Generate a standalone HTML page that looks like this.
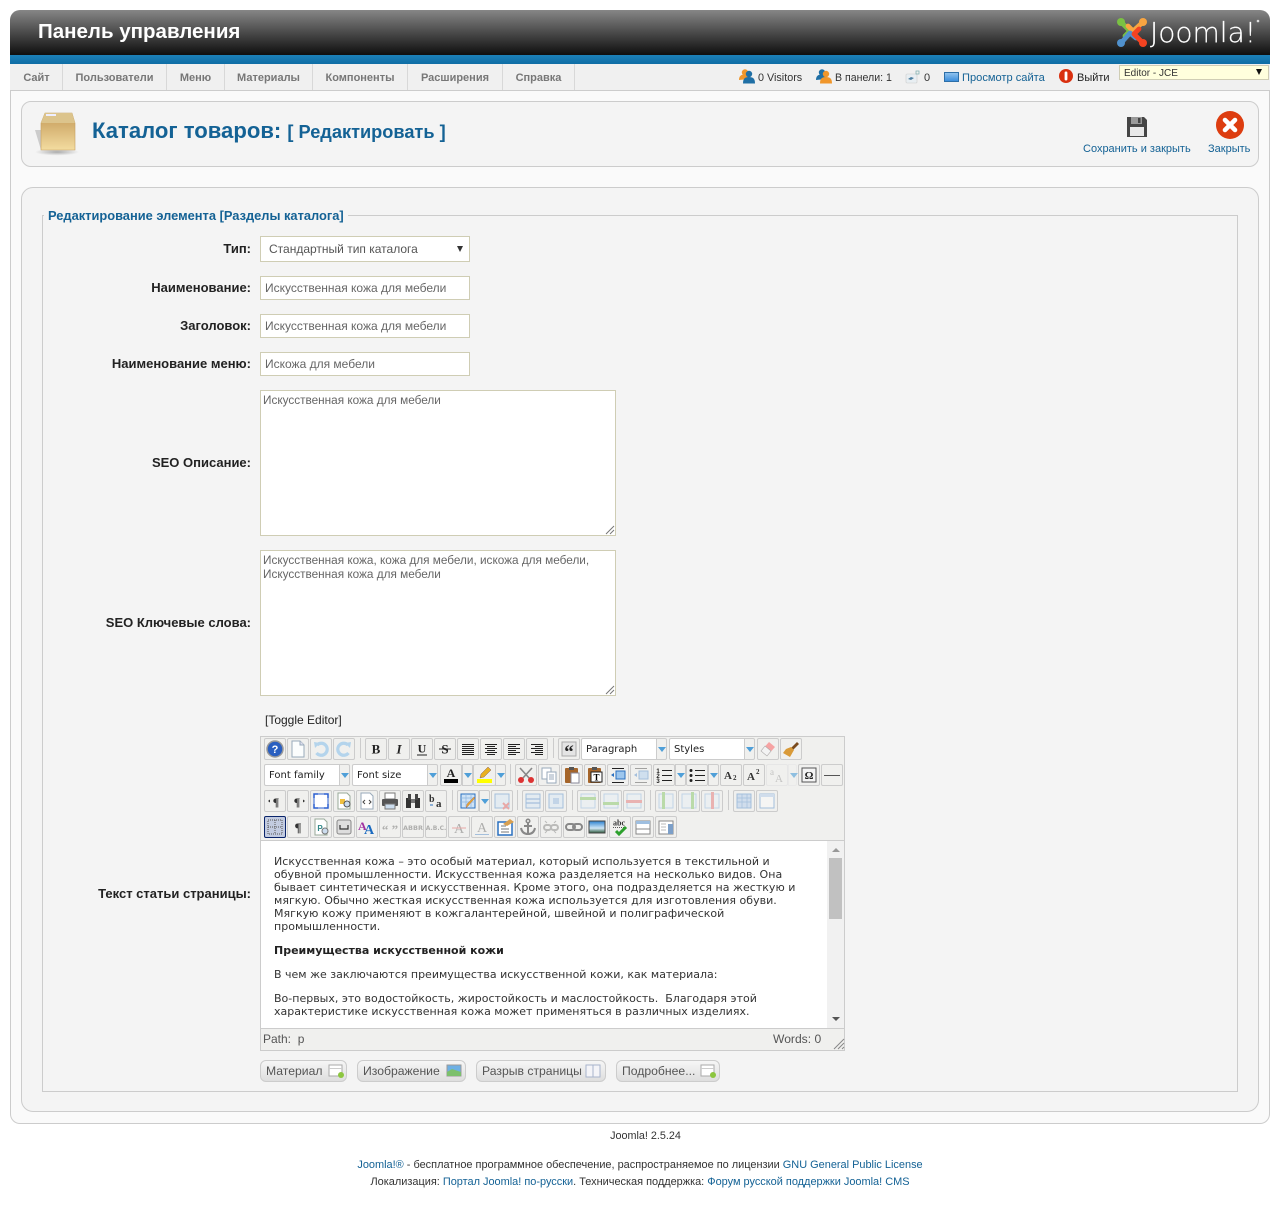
<!DOCTYPE html>
<html lang="ru"><head><meta charset="utf-8"><title>Панель управления</title>
<style>
html,body{margin:0;padding:0;background:#fff}
#p{position:relative;width:1280px;height:1211px;overflow:hidden;font-family:"Liberation Sans",sans-serif;font-size:11px;color:#333}
.a,.b,.l,.t,.m,.f,.s,.ar,.x{position:absolute}
.t{white-space:pre;line-height:14px}
.m{top:64px;height:26px;line-height:28px;text-align:center;font-weight:bold;color:#777;font-size:11px;border-right:1px solid #d8d8d8;box-sizing:border-box}
.l{left:42px;width:209px;text-align:right;font-weight:bold;font-size:13px;color:#222;line-height:16px;white-space:nowrap}
.f{background:#fff;border:1px solid #cfcdb4;box-sizing:border-box;color:#666;font-size:12px;white-space:pre;line-height:14px;overflow:hidden}
.b{width:20px;height:20px;border:1px solid #ccc;border-radius:2px;background:#f0f0ee}
.b svg{position:absolute;left:0;top:0;width:20px;height:20px}
.ar{width:9px;height:20px;border:1px solid #ccc;border-radius:0 2px 2px 0;background:#f0f0ee}
.ar:after{content:"";position:absolute;left:1px;top:8px;border:4px solid transparent;border-top:5px solid #4f9fd8;border-bottom:0}
.s{height:20px;border:1px solid #ccc;border-radius:2px 0 0 2px;background:#fff;font-family:"DejaVu Sans",sans-serif;font-size:10px;line-height:22px;color:#222;padding-left:4px;box-sizing:content-box}
.x{width:1px;height:20px;background:#ccc}
a{color:#146295;text-decoration:none}
.dis{opacity:.38}
.btn{position:absolute;top:1060px;height:20px;border:1px solid #ccc;border-radius:6px;background:linear-gradient(#f6f6f6,#dedede);font-size:12.2px;line-height:20px;color:#555;padding-left:5px;box-sizing:content-box;white-space:pre}
.btn svg{position:absolute;top:3px;width:16px;height:14px}
</style></head><body><div id="p">

<!-- header -->
<div class="a" style="left:10px;top:10px;width:1260px;height:45px;border-radius:10px 10px 0 0;background:linear-gradient(#868686,#0e0e0e)"></div>
<div class="t" style="left:38px;top:20px;font-size:20.5px;line-height:24px;font-weight:bold;color:#fff">Панель управления</div>
<div class="a" style="left:10px;top:55px;width:1260px;height:9px;background:linear-gradient(#1c80b8,#0f6da5)"></div>

<svg class="a" style="left:1116px;top:16px" width="32" height="32" viewBox="0 0 32 32" fill="none" stroke-linecap="round" stroke-linejoin="round">
<path d="M5 6 L14 15 L9 20" stroke="#7ac143" stroke-width="4.800"/>
<path d="M27 6 L17 15 L12 10" stroke="#f9a541" stroke-width="4.800"/>
<path d="M5 27 L14 17 L20 22" stroke="#5091cd" stroke-width="4.800"/>
<path d="M27 27 L18 18 L23 13" stroke="#f44321" stroke-width="4.800"/>
<circle cx="5" cy="6" r="4" fill="#7ac143"/><circle cx="27" cy="6" r="4" fill="#f9a541"/><circle cx="5" cy="27" r="4" fill="#5091cd"/><circle cx="27" cy="27" r="4" fill="#f44321"/>
</svg>
<svg class="a" style="left:1146px;top:14px" width="118" height="36"><text x="4" y="28" font-family="DejaVu Sans,sans-serif" font-weight="200" font-size="28" fill="#fff" stroke="#fff" stroke-width=".2">Joomla!</text><circle cx="112" cy="7" r="1.300" fill="#ddd"/></svg>

<!-- menu -->
<div class="a" style="left:10px;top:64px;width:1260px;height:26px;background:#f0f0f0;border-bottom:1px solid #ccc"></div>
<div class="m" style="left:11px;width:52px;border-left:0">Сайт</div>
<div class="m" style="left:63px;width:104px">Пользователи</div>
<div class="m" style="left:167px;width:58px">Меню</div>
<div class="m" style="left:225px;width:88px">Материалы</div>
<div class="m" style="left:313px;width:95px">Компоненты</div>
<div class="m" style="left:408px;width:95px">Расширения</div>
<div class="m" style="left:503px;width:72px">Справка</div>

<!-- status -->
<svg class="a" style="left:739px;top:68px" width="16" height="16" viewBox="0 0 16 16"><circle cx="6" cy="4.500" r="3.200" fill="#f0962a"/><path d="M0 12c0-4 2-5.500 6-5.500s4 1 4 4.500z" fill="#f0962a"/><circle cx="10" cy="6" r="3.200" fill="#1f6fa5"/><path d="M4 15.500c0-5 2-6.500 6-6.500s6 1.500 6 6.500z" fill="#1f6fa5"/></svg>
<div class="t" style="left:758px;top:71px;font-size:10.800px">0 Visitors</div>
<svg class="a" style="left:816px;top:68px" width="16" height="16" viewBox="0 0 16 16"><circle cx="6" cy="4.500" r="3.200" fill="#1f6fa5"/><path d="M0 12c0-4 2-5.500 6-5.500s4 1 4 4.500z" fill="#1f6fa5"/><circle cx="10" cy="6" r="3.200" fill="#f0962a"/><path d="M4 15.500c0-5 2-6.500 6-6.500s6 1.500 6 6.500z" fill="#f0962a"/></svg>
<div class="t" style="left:835px;top:71px;font-size:10.600px">В панели: 1</div>
<svg class="a" style="left:905px;top:70px" width="15" height="14" viewBox="0 0 15 14"><rect x="1" y="4" width="11" height="9" rx="1" fill="#e8eef2" stroke="#ccc" stroke-width=".6"/><path d="M3 9l3-2 3 1-3 2z" fill="#4c7fa0"/><rect x="11" y="1" width="3" height="3" fill="none" stroke="#7aa" stroke-width=".7"/></svg>
<div class="t" style="left:924px;top:71px;font-size:11px">0</div>
<div class="a" style="left:944px;top:72px;width:13px;height:8px;background:linear-gradient(#8fc2ee,#3d8edb);border:1px solid #2d6fa8"></div>
<div class="t" style="left:962px;top:71px;font-size:11.100px"><a>Просмотр сайта</a></div>
<svg class="a" style="left:1059px;top:69px" width="14" height="14" viewBox="0 0 14 14"><circle cx="7" cy="7" r="7" fill="#d9300f"/><rect x="5.600" y="2.500" width="2.800" height="9" rx="1.200" fill="#fff"/></svg>
<div class="t" style="left:1077px;top:71px;font-size:11px;color:#222">Выйти</div>
<div class="a" style="left:1119px;top:65px;width:150px;height:15px;box-sizing:border-box;background:#ffffdd;border:1px solid #cfcdb4"></div>
<div class="t" style="left:1124px;top:67px;font-size:10px;line-height:13px">Editor - JCE</div>
<div class="a" style="left:1256px;top:69px;border:3.500px solid transparent;border-top:6px solid #111;border-bottom:0"></div>

<!-- content frame -->
<div class="a" style="left:10px;top:91px;width:1258px;height:1032px;border:1px solid #ccc;border-top:0;border-radius:0 0 10px 10px;background:#fafafa"></div>

<!-- toolbar box -->
<div class="a" style="left:21px;top:101px;width:1236px;height:64px;border:1px solid #ccc;border-radius:10px;background:#f4f4f4"></div>
<svg class="a" style="left:29px;top:108px" width="54" height="50" viewBox="0 0 54 50"><defs><linearGradient id="g1" x1="0" y1="0" x2="0" y2="1"><stop offset="0" stop-color="#c49a58"/><stop offset="1" stop-color="#f3dca0"/></linearGradient><radialGradient id="g2"><stop offset="0" stop-color="#aaa"/><stop offset="1" stop-color="#f4f4f4"/></radialGradient></defs><ellipse cx="28" cy="44" rx="22" ry="3.500" fill="url(#g2)"/><path d="M6 22L12 42V22z" fill="#ccc"/><path d="M16 5H43L46 15V42H12V15z" fill="url(#g1)" stroke="#c5a060" stroke-width=".6"/><path d="M16 5H43L46 15H12z" fill="#dcc48c"/><rect x="17" y="6" width="10" height="2" fill="#eef"/></svg>
<div class="t" style="left:92px;top:117px;font-size:22.100px;line-height:28px;font-weight:bold;color:#146295">Каталог товаров: <span style="font-size:18.200px">[ Редактировать ]</span></div>

<svg class="a" style="left:1125px;top:114px" width="24" height="24" viewBox="0 0 24 24"><path d="M2 3h17l3 3v17H2z" fill="#454545"/><rect x="6" y="3" width="11" height="7" fill="#999"/><rect x="13" y="4" width="2.500" height="5" fill="#444"/><rect x="5" y="13" width="14" height="9" fill="#e8e8e8"/></svg>
<div class="t" style="left:1083px;top:142px;font-size:11px"><a>Сохранить и закрыть</a></div>
<svg class="a" style="left:1215px;top:110px" width="30" height="30" viewBox="0 0 30 30"><circle cx="15" cy="15" r="14" fill="#dd3d10"/><path d="M10 10l10 10M20 10L10 20" stroke="#fff" stroke-width="4.600" stroke-linecap="round"/></svg>
<div class="t" style="left:1208px;top:142px;font-size:11px"><a>Закрыть</a></div>

<!-- form box -->
<div class="a" style="left:21px;top:187px;width:1236px;height:923px;border:1px solid #ccc;border-radius:12px;background:#f4f4f4"></div>
<div class="a" style="left:42px;top:215px;width:1194px;height:875px;border:1px solid #ccc"></div>
<div class="t" style="left:44px;top:209px;padding:0 4px 0 4px;background:#f4f4f4;font-size:12.870px;font-weight:bold;color:#146295">Редактирование элемента [Разделы каталога]</div>

<div class="l" style="top:241px">Тип:</div>
<div class="f" style="left:260px;top:236px;width:210px;height:26px;padding:5px 8px;color:#555">Стандартный тип каталога</div>
<div class="a" style="left:457px;top:246px;border:3px solid transparent;border-top:6px solid #333;border-bottom:0"></div>
<div class="l" style="top:280px">Наименование:</div>
<div class="f" style="left:260px;top:276px;width:210px;height:24px;padding:4px">Искусственная кожа для мебели</div>
<div class="l" style="top:318px">Заголовок:</div>
<div class="f" style="left:260px;top:314px;width:210px;height:24px;padding:4px">Искусственная кожа для мебели</div>
<div class="l" style="top:356px">Наименование меню:</div>
<div class="f" style="left:260px;top:352px;width:210px;height:24px;padding:4px">Искожа для мебели</div>

<div class="l" style="top:455px">SEO Описание:</div>
<div class="f" style="left:260px;top:390px;width:356px;height:146px;padding:3px 2px;font-size:11.780px">Искусственная кожа для мебели</div>
<svg class="a" style="left:605px;top:525px" width="10" height="10"><path d="M1 9L9 1M5 9L9 5" stroke="#777" stroke-width="1"/></svg>
<div class="l" style="top:615px">SEO Ключевые слова:</div>
<div class="f" style="left:260px;top:550px;width:356px;height:146px;padding:3px 2px;font-size:11.780px">Искусственная кожа, кожа для мебели, искожа для мебели,
Искусственная кожа для мебели</div>
<svg class="a" style="left:605px;top:685px" width="10" height="10"><path d="M1 9L9 1M5 9L9 5" stroke="#777" stroke-width="1"/></svg>

<div class="t" style="left:265px;top:713px;font-size:12px;color:#222">[Toggle Editor]</div>
<div class="l" style="top:886px">Текст статьи страницы:</div>

<!-- editor -->
<div class="a" style="left:260px;top:736px;width:583px;height:313px;border:1px solid #ccc;background:#f0f0ee"></div>
<div class="a" style="left:261px;top:840px;width:566px;height:188px;background:#fff;border-top:1px solid #ccc"></div>
<div class="a" style="left:827px;top:840px;width:17px;height:188px;background:#f1f1f1;border-top:1px solid #ccc"></div>
<div class="a" style="left:829px;top:858px;width:13px;height:61px;background:#c1c1c1"></div>
<div class="a" style="left:832px;top:848px;border:4px solid transparent;border-bottom:4px solid #999;border-top:0"></div>
<div class="a" style="left:832px;top:1017px;border:4px solid transparent;border-top:4px solid #555;border-bottom:0"></div>
<div class="a" style="left:261px;top:1028px;width:583px;height:1px;background:#ccc"></div>

<div class="t" style="left:274px;top:855px;font-family:'DejaVu Sans',sans-serif;font-size:11px;line-height:13px;letter-spacing:.02px;color:#333">Искусственная кожа – это особый материал, который используется в текстильной и
обувной промышленности. Искусственная кожа разделяется на несколько видов. Она
бывает синтетическая и искусственная. Кроме этого, она подразделяется на жесткую и
мягкую. Обычно жесткая искусственная кожа используется для изготовления обуви.
Мягкую кожу применяют в кожгалантерейной, швейной и полиграфической
промышленности.</div>
<div class="t" style="left:274px;top:944px;font-family:'DejaVu Sans',sans-serif;font-size:11px;line-height:13px;font-weight:bold;color:#222">Преимущества искусственной кожи</div>
<div class="t" style="left:274px;top:968px;font-family:'DejaVu Sans',sans-serif;font-size:11px;line-height:13px;color:#333">В чем же заключаются преимущества искусственной кожи, как материала:</div>
<div class="t" style="left:274px;top:992px;font-family:'DejaVu Sans',sans-serif;font-size:11px;line-height:13px;color:#333">Во-первых, это водостойкость, жиростойкость и маслостойкость.  Благодаря этой
характеристике искусственная кожа может применяться в различных изделиях.</div>

<div class="t" style="left:263px;top:1032px;font-size:12px;color:#555">Path:  p</div>
<div class="t" style="left:773px;top:1032px;font-size:12.100px;color:#555">Words: 0</div>
<svg class="a" style="left:833px;top:1038px" width="12" height="12"><path d="M1 11L11 1M5 11L11 5M9 11L11 9" stroke="#888"/></svg>

<!-- toolbar row 1 -->
<div class="b" style="left:264px;top:738px"><svg viewBox="0 0 20 20"><circle cx="10" cy="10" r="8" fill="#2a5fc0" stroke="#999" stroke-width="1.500"/><text x="10" y="14" text-anchor="middle" font-size="11" font-weight="bold" fill="#fff" font-family="Liberation Sans">?</text></svg></div>
<div class="b" style="left:287px;top:738px"><svg viewBox="0 0 20 20"><path d="M4 2h8l4 4v12H4z" fill="#fbfdfd" stroke="#9ab"/><path d="M12 2v4h4" fill="#dde" stroke="#9ab"/></svg></div>
<div class="b" style="left:310px;top:738px"><svg viewBox="0 0 20 20"><path d="M6 6a6 6 0 1 1-.500 8" fill="none" stroke="#b4d4ec" stroke-width="3.200"/><path d="M3 3l6 1-5 5z" fill="#b4d4ec"/></svg></div>
<div class="b" style="left:333px;top:738px"><svg viewBox="0 0 20 20"><path d="M14 6a6 6 0 1 0 .500 8" fill="none" stroke="#b4d4ec" stroke-width="3.200"/><path d="M17 3l-6 1 5 5z" fill="#b4d4ec"/></svg></div>
<div class="x" style="left:360px;top:738px"></div>
<div class="b" style="left:365px;top:738px"><svg viewBox="0 0 20 20"><text x="10" y="14.500" text-anchor="middle" font-size="13" font-weight="bold" fill="#222" font-family="Liberation Serif">B</text></svg></div>
<div class="b" style="left:388px;top:738px"><svg viewBox="0 0 20 20"><text x="10" y="14.500" text-anchor="middle" font-size="13" font-style="italic" font-weight="bold" fill="#222" font-family="Liberation Serif">I</text></svg></div>
<div class="b" style="left:411px;top:738px"><svg viewBox="0 0 20 20"><text x="10" y="13.500" text-anchor="middle" font-size="12" font-weight="bold" fill="#222" font-family="Liberation Serif">U</text><path d="M5 16h10" stroke="#222"/></svg></div>
<div class="b" style="left:434px;top:738px"><svg viewBox="0 0 20 20"><text x="10" y="14.500" text-anchor="middle" font-size="13" font-weight="bold" fill="#222" font-family="Liberation Serif">S</text><path d="M4 10h12" stroke="#222"/></svg></div>
<div class="b" style="left:457px;top:738px"><svg viewBox="0 0 20 20"><path d="M4 5.500h12M4 7.500h12M4 9.500h12M4 11.500h12M4 13.500h12M4 15.500h12" stroke="#222"/></svg></div>
<div class="b" style="left:480px;top:738px"><svg viewBox="0 0 20 20"><path d="M4 5.500h12M6 7.500h8M4 9.500h12M6 11.500h8M4 13.500h12M6 15.500h8" stroke="#222"/></svg></div>
<div class="b" style="left:503px;top:738px"><svg viewBox="0 0 20 20"><path d="M4 5.500h12M4 7.500h8M4 9.500h12M4 11.500h8M4 13.500h12M4 15.500h8" stroke="#222"/></svg></div>
<div class="b" style="left:526px;top:738px"><svg viewBox="0 0 20 20"><path d="M4 5.500h12M8 7.500h8M4 9.500h12M8 11.500h8M4 13.500h12M8 15.500h8" stroke="#222"/></svg></div>
<div class="x" style="left:553px;top:738px"></div>
<div class="b" style="left:558px;top:738px"><svg viewBox="0 0 20 20"><rect x="3" y="3" width="14" height="14" fill="#e4e4e4" stroke="#aaa"/><text x="10" y="19" text-anchor="middle" font-size="19" font-weight="bold" fill="#222" font-family="Liberation Serif">“</text></svg></div>
<div class="s" style="left:581px;top:738px;width:70px">Paragraph</div><div class="ar" style="left:656px;top:738px"></div>
<div class="s" style="left:669px;top:738px;width:70px">Styles</div><div class="ar" style="left:744px;top:738px"></div>
<div class="b" style="left:757px;top:738px"><svg viewBox="0 0 20 20"><path d="M11 3l6 5-8 9-6-5z" fill="#f6a3a3"/><path d="M7 7l6 5-4 5-6-5z" fill="#f3f3f3" stroke="#aaa" stroke-width=".6"/></svg></div>
<div class="b" style="left:780px;top:738px"><svg viewBox="0 0 20 20"><path d="M16 3l2 2-6 6-2-2z" fill="#7a4a1c"/><path d="M10 8l3 3-4 7-7-4 3-4z" fill="#d99a38"/></svg></div>

<!-- toolbar row 2 -->
<div class="s" style="left:264px;top:764px;width:70px">Font family</div><div class="ar" style="left:339px;top:764px"></div>
<div class="s" style="left:352px;top:764px;width:70px">Font size</div><div class="ar" style="left:427px;top:764px"></div>
<div class="b" style="left:440px;top:764px"><svg viewBox="0 0 20 20"><text x="10" y="12" text-anchor="middle" font-size="12" font-weight="bold" fill="#222" font-family="Liberation Serif">A</text><rect x="3" y="14" width="14" height="4" fill="#000"/></svg></div><div class="ar" style="left:462px;top:764px"></div>
<div class="b" style="left:473px;top:764px;width:21px"><svg viewBox="0 0 20 20"><path d="M14 2l3 3-7 7-4 1 1-4z" fill="#e8b020" stroke="#866"  stroke-width=".5"/><rect x="3" y="14" width="15" height="4" fill="#ff0"/></svg></div><div class="ar" style="left:495px;top:764px"></div>
<div class="x" style="left:510px;top:764px"></div>
<div class="b" style="left:515px;top:764px"><svg viewBox="0 0 20 20"><path d="M4 3l10 11M16 3L6 14" stroke="#888" stroke-width="1.600"/><circle cx="5" cy="15" r="3" fill="#d33"/><circle cx="15" cy="15" r="3" fill="#d33"/></svg></div>
<div class="b" style="left:538px;top:764px"><svg viewBox="0 0 20 20"><rect x="3" y="3" width="9" height="11" fill="#fff" stroke="#9ab"/><rect x="8" y="7" width="9" height="11" fill="#fff" stroke="#9ab"/><path d="M10 10h5M10 12h5M10 14h5" stroke="#9ab"/></svg></div>
<div class="b" style="left:561px;top:764px"><svg viewBox="0 0 20 20"><rect x="3" y="3" width="13" height="15" rx="1" fill="#a5652a"/><rect x="7" y="2" width="5" height="3" fill="#555"/><rect x="9" y="8" width="8" height="10" fill="#fff" stroke="#889"/></svg></div>
<div class="b" style="left:584px;top:764px"><svg viewBox="0 0 20 20"><rect x="3" y="3" width="13" height="15" rx="1" fill="#a5652a"/><rect x="7" y="2" width="5" height="3" fill="#555"/><rect x="6" y="7" width="11" height="10" fill="#fff" stroke="#222"/><text x="11.500" y="15.500" text-anchor="middle" font-size="9" font-weight="bold" fill="#000" font-family="Liberation Serif">T</text></svg></div>
<div class="b" style="left:607px;top:764px"><svg viewBox="0 0 20 20"><path d="M4 3.500h12M4 17.500h12" stroke="#222"/><rect x="8" y="6" width="9" height="8" fill="#9cc6ee" stroke="#2a70c0"/><path d="M3 10l3-2v4z" fill="#2a70c0"/></svg></div>
<div class="b" style="left:630px;top:764px"><svg viewBox="0 0 20 20" class="dis"><path d="M4 3.500h12M4 17.500h12" stroke="#222"/><rect x="8" y="6" width="9" height="8" fill="#9cc6ee" stroke="#2a70c0"/><path d="M6 8l-3 2 3 2z" fill="#2a70c0"/></svg></div>
<div class="b" style="left:653px;top:764px"><svg viewBox="0 0 20 20"><path d="M8 5.500h10M8 10.500h10M8 15.500h10" stroke="#222"/><text x="4" y="8" text-anchor="middle" font-size="6" font-weight="bold" fill="#222" font-family="Liberation Sans">1</text><text x="4" y="13" text-anchor="middle" font-size="6" font-weight="bold" fill="#222" font-family="Liberation Sans">2</text><text x="4" y="18" text-anchor="middle" font-size="6" font-weight="bold" fill="#222" font-family="Liberation Sans">3</text></svg></div><div class="ar" style="left:675px;top:764px"></div>
<div class="b" style="left:686px;top:764px"><svg viewBox="0 0 20 20"><path d="M8 5.500h10M8 10.500h10M8 15.500h10" stroke="#222"/><circle cx="4" cy="5.500" r="1.500" fill="#222"/><circle cx="4" cy="10.500" r="1.500" fill="#222"/><circle cx="4" cy="15.500" r="1.500" fill="#222"/></svg></div><div class="ar" style="left:708px;top:764px"></div>
<div class="b" style="left:720px;top:764px"><svg viewBox="0 0 20 20"><text x="3" y="14" font-size="11" font-weight="bold" fill="#333" font-family="Liberation Serif">A</text><text x="12" y="15" font-size="7" font-weight="bold" fill="#333" font-family="Liberation Serif">2</text></svg></div>
<div class="b" style="left:743px;top:764px"><svg viewBox="0 0 20 20"><text x="3" y="15" font-size="11" font-weight="bold" fill="#333" font-family="Liberation Serif">A</text><text x="12" y="9" font-size="7" font-weight="bold" fill="#333" font-family="Liberation Serif">2</text></svg></div>
<div class="b" style="left:766px;top:764px;border-color:#e6e6e6"><svg class="dis" viewBox="0 0 20 20"><text x="3" y="10" font-size="9" fill="#777" font-family="Liberation Serif">a</text><text x="8" y="17" font-size="11" fill="#777" font-family="Liberation Serif">A</text></svg></div><div class="ar" style="left:788px;top:764px;width:7px;border-color:#e6e6e6;opacity:.6"></div>
<div class="b" style="left:798px;top:764px"><svg viewBox="0 0 20 20"><rect x="3" y="3" width="14" height="14" fill="#f4f4f4" stroke="#555"/><text x="10" y="14" text-anchor="middle" font-size="11" font-weight="bold" fill="#222" font-family="Liberation Serif">Ω</text></svg></div>
<div class="b" style="left:821px;top:764px"><svg viewBox="0 0 20 20"><path d="M2 10.500h16" stroke="#555"/></svg></div>

<!-- toolbar row 3 -->
<div class="b" style="left:264px;top:790px"><svg viewBox="0 0 20 20"><text x="11" y="15" text-anchor="middle" font-size="12" font-weight="bold" fill="#333" font-family="Liberation Serif">¶</text><path d="M3 10l2-1.500v3z" fill="#333"/></svg></div>
<div class="b" style="left:287px;top:790px"><svg viewBox="0 0 20 20"><text x="9" y="15" text-anchor="middle" font-size="12" font-weight="bold" fill="#333" font-family="Liberation Serif">¶</text><path d="M17 10l-2-1.500v3z" fill="#333"/></svg></div>
<div class="b" style="left:310px;top:790px"><svg viewBox="0 0 20 20"><rect x="3" y="3" width="14" height="14" fill="#fff" stroke="#2a5fd0"/><path d="M3 7V3h4M13 3h4v4M17 13v4h-4M7 17H3v-4" fill="none" stroke="#2a5fd0" stroke-width="1.500"/></svg></div>
<div class="b" style="left:333px;top:790px"><svg viewBox="0 0 20 20"><path d="M4 2h9l3 3v13H4z" fill="#fff" stroke="#9a9"/><rect x="6" y="8" width="5" height="5" fill="#f0c040"/><circle cx="13" cy="13" r="3" fill="#cde" stroke="#555"/></svg></div>
<div class="b" style="left:356px;top:790px"><svg viewBox="0 0 20 20"><path d="M4 2h9l3 3v13H4z" fill="#fff" stroke="#9ab"/><path d="M8 9l-2 2 2 2M12 9l2 2-2 2" fill="none" stroke="#444"/></svg></div>
<div class="b" style="left:379px;top:790px"><svg viewBox="0 0 20 20"><rect x="5" y="2" width="10" height="6" fill="#fff" stroke="#777"/><rect x="2" y="8" width="16" height="7" rx="1" fill="#555"/><rect x="5" y="13" width="10" height="5" fill="#cde" stroke="#777"/></svg></div>
<div class="b" style="left:402px;top:790px"><svg viewBox="0 0 20 20"><path d="M3 7h5v10H3zM12 7h5v10h-5z" fill="#333"/><path d="M5 3h3v6H5zM12 3h3v6h-3z" fill="#444"/><rect x="8" y="8" width="4" height="4" fill="#777"/></svg></div>
<div class="b" style="left:425px;top:790px"><svg viewBox="0 0 20 20"><text x="3" y="11" font-size="10" font-weight="bold" fill="#333" font-family="Liberation Serif">b</text><text x="10" y="16" font-size="11" font-weight="bold" fill="#333" font-family="Liberation Serif">a</text><path d="M4 14h3" stroke="#2a70c0"/></svg></div>
<div class="x" style="left:452px;top:790px"></div>
<div class="b" style="left:457px;top:790px"><svg viewBox="0 0 20 20"><rect x="3" y="3" width="14" height="14" fill="#cfe3f6" stroke="#2a70c0"/><path d="M3 7h14M3 11h14M8 3v14M13 3v14" stroke="#8fb6de" stroke-width=".7"/><path d="M17 7l-7 8-2 2 1-4 7-7z" fill="#e4a830" stroke="#a66" stroke-width=".4"/></svg></div><div class="ar" style="left:479px;top:790px"></div>
<div class="b" style="left:491px;top:790px"><svg class="dis" viewBox="0 0 20 20"><rect x="3" y="3" width="14" height="14" fill="#cfe3f6" stroke="#2a70c0"/><path d="M11 12l6 6M17 12l-6 6" stroke="#d33" stroke-width="2"/></svg></div>
<div class="x" style="left:517px;top:790px"></div>
<div class="b" style="left:522px;top:790px"><svg class="dis" viewBox="0 0 20 20"><rect x="3" y="3" width="14" height="14" fill="#cfe3f6" stroke="#2a70c0"/><path d="M3 8h14M3 12h14" stroke="#2a70c0" stroke-width="1.300"/></svg></div>
<div class="b" style="left:545px;top:790px"><svg class="dis" viewBox="0 0 20 20"><rect x="3" y="3" width="14" height="14" fill="#cfe3f6" stroke="#2a70c0"/><rect x="7" y="7" width="6" height="6" fill="#7aa9dd"/></svg></div>
<div class="x" style="left:572px;top:790px"></div>
<div class="b" style="left:577px;top:790px"><svg class="dis" viewBox="0 0 20 20"><rect x="3" y="3" width="14" height="14" fill="#e4eef8" stroke="#7aa9dd"/><rect x="2" y="6" width="16" height="3" fill="#64b83c"/></svg></div>
<div class="b" style="left:600px;top:790px"><svg class="dis" viewBox="0 0 20 20"><rect x="3" y="3" width="14" height="14" fill="#e4eef8" stroke="#7aa9dd"/><rect x="2" y="11" width="16" height="3" fill="#64b83c"/></svg></div>
<div class="b" style="left:623px;top:790px"><svg class="dis" viewBox="0 0 20 20"><rect x="3" y="3" width="14" height="14" fill="#e4eef8" stroke="#7aa9dd"/><rect x="2" y="9" width="16" height="3" fill="#e05050"/></svg></div>
<div class="x" style="left:650px;top:790px"></div>
<div class="b" style="left:655px;top:790px"><svg class="dis" viewBox="0 0 20 20"><rect x="3" y="3" width="14" height="14" fill="#e4eef8" stroke="#7aa9dd"/><rect x="6" y="1" width="3" height="17" fill="#64b83c"/></svg></div>
<div class="b" style="left:678px;top:790px"><svg class="dis" viewBox="0 0 20 20"><rect x="3" y="3" width="14" height="14" fill="#e4eef8" stroke="#7aa9dd"/><rect x="12" y="1" width="3" height="17" fill="#64b83c"/></svg></div>
<div class="b" style="left:701px;top:790px"><svg class="dis" viewBox="0 0 20 20"><rect x="3" y="3" width="14" height="14" fill="#e4eef8" stroke="#7aa9dd"/><rect x="9" y="1" width="3" height="17" fill="#e05050"/></svg></div>
<div class="x" style="left:728px;top:790px"></div>
<div class="b" style="left:733px;top:790px"><svg class="dis" viewBox="0 0 20 20"><rect x="3" y="3" width="14" height="14" fill="#9fc0ea" stroke="#2a70c0"/><path d="M3 7h14M3 11h14M8 3v14M13 3v14" stroke="#2a70c0" stroke-width=".7"/></svg></div>
<div class="b" style="left:756px;top:790px"><svg class="dis" viewBox="0 0 20 20"><rect x="3" y="3" width="14" height="14" fill="#fff" stroke="#2a70c0"/><rect x="3" y="3" width="14" height="3" fill="#9fc0ea"/></svg></div>

<!-- toolbar row 4 -->
<div class="b" style="left:264px;top:816px;background:#c2cbe0;border-color:#0a246a"><svg viewBox="0 0 20 20"><rect x="3" y="3" width="14" height="14" fill="none" stroke="#555" stroke-dasharray="1 1"/><path d="M10 3v14M3 10h14" stroke="#555" stroke-dasharray="1 1"/></svg></div>
<div class="b" style="left:287px;top:816px"><svg viewBox="0 0 20 20"><text x="10" y="15" text-anchor="middle" font-size="13" font-weight="bold" fill="#333" font-family="Liberation Serif">¶</text></svg></div>
<div class="b" style="left:310px;top:816px"><svg viewBox="0 0 20 20"><path d="M4 2h9l3 3v13H4z" fill="#fff" stroke="#9a9"/><text x="9" y="14" text-anchor="middle" font-size="8" font-weight="bold" fill="#388" font-family="Liberation Sans">P</text><circle cx="14" cy="14" r="3" fill="#cde" stroke="#777"/></svg></div>
<div class="b" style="left:333px;top:816px"><svg viewBox="0 0 20 20"><rect x="3" y="3" width="14" height="14" rx="2" fill="#ddd" stroke="#888"/><path d="M6 8v4h8V8" fill="none" stroke="#333" stroke-width="1.200"/></svg></div>
<div class="b" style="left:356px;top:816px"><svg viewBox="0 0 20 20"><text x="1" y="13" font-size="12" font-weight="bold" fill="#a030a0" font-family="Liberation Serif">A</text><text x="7" y="17" font-size="14" font-weight="bold" fill="#1a6ac0" font-family="Liberation Serif">A</text></svg></div>
<div class="b" style="left:379px;top:816px"><svg class="dis" viewBox="0 0 20 20"><text x="10" y="17" text-anchor="middle" font-size="13" font-weight="bold" fill="#444" font-family="Liberation Serif">“ ”</text></svg></div>
<div class="b" style="left:402px;top:816px"><svg class="dis" viewBox="0 0 20 20"><text x="10" y="13" text-anchor="middle" font-size="6.500" font-weight="bold" fill="#444" font-family="DejaVu Sans">ABBR</text></svg></div>
<div class="b" style="left:425px;top:816px"><svg class="dis" viewBox="0 0 20 20"><text x="10" y="13" text-anchor="middle" font-size="6" font-weight="bold" fill="#444" font-family="DejaVu Sans">A.B.C.</text></svg></div>
<div class="b" style="left:448px;top:816px"><svg class="dis" viewBox="0 0 20 20"><text x="10" y="16" text-anchor="middle" font-size="14" fill="#444" font-family="Liberation Serif">A</text><path d="M3 11h14" stroke="#d33"/></svg></div>
<div class="b" style="left:471px;top:816px"><svg class="dis" viewBox="0 0 20 20"><text x="10" y="15" text-anchor="middle" font-size="14" fill="#444" font-family="Liberation Serif">A</text><path d="M3 17.500h14" stroke="#2a70c0"/></svg></div>
<div class="b" style="left:494px;top:816px"><svg viewBox="0 0 20 20"><rect x="3" y="5" width="14" height="13" fill="#fff" stroke="#2a70c0" stroke-width="1.500"/><path d="M6 9h5M6 12h8M6 15h8" stroke="#777"/><path d="M8 7l7-5 4 3-7 4z" fill="#d9a050"/></svg></div>
<div class="b" style="left:517px;top:816px"><svg viewBox="0 0 20 20" fill="none" stroke="#888" stroke-width="1.500"><circle cx="10" cy="4" r="1.800"/><path d="M10 6v11M6 9h8M3 11c1 5 4 6 7 6s6-1 7-6" stroke-width="2"/></svg></div>
<div class="b" style="left:540px;top:816px"><svg class="dis" viewBox="0 0 20 20" fill="none" stroke="#666" stroke-width="2"><rect x="3" y="8" width="7" height="5" rx="2.500"/><rect x="10" y="8" width="7" height="5" rx="2.500"/><path d="M4 4l2 2M15 4l-2 2M4 16l2-2M15 16l-2-2" stroke-width="1"/></svg></div>
<div class="b" style="left:563px;top:816px"><svg viewBox="0 0 20 20" fill="none" stroke="#888" stroke-width="2"><rect x="2" y="7" width="9" height="6" rx="3"/><rect x="9" y="7" width="9" height="6" rx="3"/></svg></div>
<div class="b" style="left:586px;top:816px"><svg viewBox="0 0 20 20"><defs><linearGradient id="g3" x1="0" y1="0" x2="0" y2="1"><stop offset="0" stop-color="#2a80d0"/><stop offset=".6" stop-color="#cfe6f6"/><stop offset="1" stop-color="#2d5a3a"/></linearGradient></defs><rect x="2" y="4" width="16" height="12" fill="url(#g3)" stroke="#444"/></svg></div>
<div class="b" style="left:609px;top:816px"><svg viewBox="0 0 20 20"><text x="9" y="8.500" text-anchor="middle" font-size="8" font-weight="bold" fill="#333" font-family="Liberation Serif">abc</text><path d="M3 10.500h13" stroke="#555" stroke-dasharray="1 1"/><path d="M6 14l3 3 7-7" fill="none" stroke="#2ca02c" stroke-width="3"/></svg></div>
<div class="b" style="left:632px;top:816px"><svg viewBox="0 0 20 20"><rect x="3" y="4" width="14" height="13" fill="#fff" stroke="#888"/><rect x="3" y="4" width="14" height="3" fill="#9fbfe0"/><path d="M3 12h14" stroke="#888"/></svg></div>
<div class="b" style="left:655px;top:816px"><svg viewBox="0 0 20 20"><rect x="3" y="4" width="14" height="13" fill="#fff" stroke="#888"/><rect x="12" y="7" width="5" height="10" fill="#7c9fc8"/><path d="M5 7h5M5 10h5M5 13h5" stroke="#bbb"/></svg></div>

<!-- insert buttons -->
<div class="btn" style="left:260px;width:80px">Материал<svg style="left:67px" viewBox="0 0 16 14"><rect x="1" y="1" width="13" height="11" fill="#fff" stroke="#aaa"/><rect x="1" y="4" width="13" height="1" fill="#ccc"/><circle cx="13" cy="11" r="3" fill="#8cc63f"/></svg></div>
<div class="btn" style="left:357px;width:102px">Изображение<svg style="left:88px" viewBox="0 0 16 14"><rect x="1" y="1" width="14" height="11" fill="#6eb0e4" stroke="#999"/><path d="M1 8l5-3 9 3v4H1z" fill="#7cc06c"/></svg></div>
<div class="btn" style="left:476px;width:123px">Разрыв страницы<svg style="left:108px" viewBox="0 0 16 14"><rect x="1" y="1" width="14" height="12" fill="#f4f4f8" stroke="#a8b4cc"/><path d="M8 1v12" stroke="#a8b4cc"/></svg></div>
<div class="btn" style="left:616px;width:97px">Подробнее...<svg style="left:83px" viewBox="0 0 16 14"><rect x="1" y="1" width="13" height="11" fill="#fff" stroke="#aaa"/><rect x="1" y="4" width="13" height="1" fill="#ccc"/><circle cx="13" cy="11" r="3" fill="#8cc63f"/></svg></div>

<!-- footer -->
<div class="t" style="left:0;top:1129px;width:1291px;text-align:center;font-size:10.800px;color:#333">Joomla! 2.5.24</div>
<div class="t" style="left:0;top:1158px;width:1280px;text-align:center;font-size:10.950px;color:#333"><a>Joomla!®</a> - бесплатное программное обеспечение, распространяемое по лицензии <a>GNU General Public License</a></div>
<div class="t" style="left:0;top:1175px;width:1280px;text-align:center;font-size:10.950px;color:#333">Локализация: <a>Портал Joomla! по-русски</a>. Техническая поддержка: <a>Форум русской поддержки Joomla! CMS</a></div>

</div></body></html>
